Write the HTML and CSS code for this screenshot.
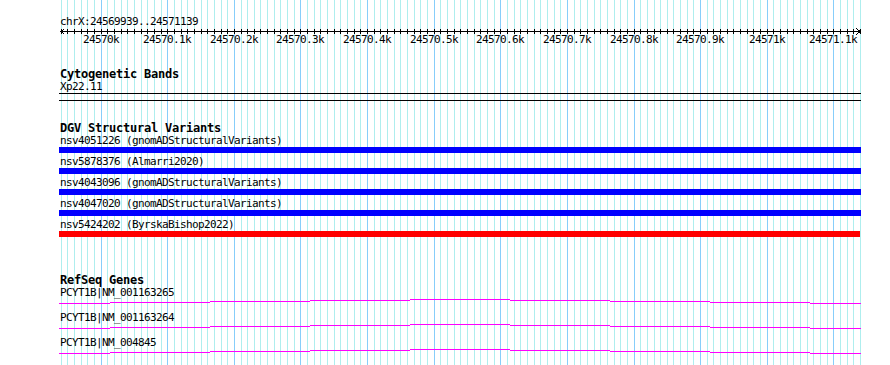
FILE: index.html
```html
<!DOCTYPE html>
<html lang="en">
<head>
    <meta charset="UTF-8">
    <title>chrX:24569939..24571139</title>
    <link rel="stylesheet" href="styles.css">
</head>
<body>
    <div class="browser">
        <svg class="grid" id="grid" width="890" height="365"></svg>

        <div class="ruler">
            <div class="ruler-title">chrX:24569939..24571139</div>
            <svg class="scale" id="scale" width="890" height="7"></svg>
            <div class="tick-labels" id="tick-labels"></div>
        </div>

        <section class="track cyto">
            <h2 class="track-title">Cytogenetic Bands</h2>
            <div class="feature-label">Xp22.11</div>
            <div class="band"></div>
        </section>

        <section class="track dgv">
            <h2 class="track-title">DGV Structural Variants</h2>
            <div class="variants">
                <div class="variant">
                    <div class="feature-label">nsv4051226 (gnomADStructuralVariants)</div>
                    <div class="bar loss"></div>
                </div>
                <div class="variant">
                    <div class="feature-label">nsv5878376 (Almarri2020)</div>
                    <div class="bar loss"></div>
                </div>
                <div class="variant">
                    <div class="feature-label">nsv4043096 (gnomADStructuralVariants)</div>
                    <div class="bar loss"></div>
                </div>
                <div class="variant">
                    <div class="feature-label">nsv4047020 (gnomADStructuralVariants)</div>
                    <div class="bar loss"></div>
                </div>
                <div class="variant">
                    <div class="feature-label">nsv5424202 (ByrskaBishop2022)</div>
                    <div class="bar gain"></div>
                </div>
            </div>
        </section>

        <section class="track refseq">
            <h2 class="track-title">RefSeq Genes</h2>
            <div class="genes">
                <div class="gene">
                    <div class="feature-label">PCYT1B|NM_001163265</div>
                    <svg class="hat" width="802" height="5"></svg>
                </div>
                <div class="gene">
                    <div class="feature-label">PCYT1B|NM_001163264</div>
                    <svg class="hat" width="802" height="5"></svg>
                </div>
                <div class="gene">
                    <div class="feature-label">PCYT1B|NM_004845</div>
                    <svg class="hat" width="802" height="5"></svg>
                </div>
            </div>
        </section>
    </div>

    <script>
        const SVG_NS = 'http://www.w3.org/2000/svg';
        const start = 24569939;
        const end = 24571139;
        const left = 60;
        const width = 800;
        const scale = width / (end - start + 1);

        function toX(pos) {
            return Math.round(left + (pos - start) * scale);
        }

        function addRect(svg, x, y, w, h, cls) {
            const r = document.createElementNS(SVG_NS, 'rect');
            r.setAttribute('x', x);
            r.setAttribute('y', y);
            r.setAttribute('width', w);
            r.setAttribute('height', h);
            r.setAttribute('class', cls);
            svg.appendChild(r);
        }

        // grid lines every 10bp, darker every 100bp
        const grid = document.getElementById('grid');
        const scaleBar = document.getElementById('scale');
        for (let pos = 24569940; pos <= end + 1; pos += 10) {
            const x = toX(pos);
            addRect(grid, x, 0, 1, 365, pos % 100 === 0 ? 'major' : 'minor');
            addRect(scaleBar, x, 1, 1, 5, 'ink');
        }

        // ruler line and arrow heads
        addRect(scaleBar, left, 3, width + 1, 1, 'ink');
        const arrows = document.createElementNS(SVG_NS, 'path');
        arrows.setAttribute('d', 'M64.5 0.5 L61 3.5 L64.5 6.5 M856.5 0.5 L860 3.5 L856.5 6.5');
        arrows.setAttribute('class', 'arrow');
        scaleBar.appendChild(arrows);

        const labels = document.getElementById('tick-labels');
        for (let pos = 24570000; pos <= end; pos += 100) {
            const label = document.createElement('span');
            label.className = 'tick-label';
            label.textContent = (pos / 1000) + 'k';
            label.style.left = toX(pos) + 'px';
            labels.appendChild(label);
        }

        // intron "hat" connectors, peak in the middle of the view
        const steps = [[59, 110, 4], [110, 210, 3], [210, 310, 2], [310, 410, 1], [410, 510, 0],
                       [510, 610, 1], [610, 710, 2], [710, 810, 3], [810, 861, 4]];
        document.querySelectorAll('.hat').forEach(svg => {
            steps.forEach(([x1, x2, y]) => addRect(svg, x1 - 59, y, x2 - x1, 1, 'intron'));
        });
    </script>
</body>
</html>
```

FILE: styles.css
```css
body {
    margin: 0;
    background-color: #fff;
    color: #000;
    font-family: "DejaVu Sans Mono", "Liberation Mono", monospace;
    font-size: 11px;
    letter-spacing: -0.62px;
}

.browser {
    position: relative;
    width: 890px;
    height: 365px;
    overflow: hidden;
}

.grid {
    position: absolute;
    top: 0;
    left: 0;
    shape-rendering: crispEdges;
}

.grid .minor {
    fill: #aeeeee;
}

.grid .major {
    fill: #87cefa;
}

.ruler {
    position: relative;
    padding-top: 16px;
}

.ruler-title {
    padding-left: 60px;
    line-height: 12px;
}

.scale {
    display: block;
    shape-rendering: crispEdges;
}

.scale .ink {
    fill: #000;
}

.scale .arrow {
    fill: none;
    stroke: #000;
    stroke-width: 1;
}

.tick-labels {
    position: relative;
    height: 10px;
    line-height: 10px;
}

.tick-label {
    position: absolute;
    top: 0;
    transform: translateX(-50%);
    white-space: nowrap;
}

.track {
    position: relative;
    padding-left: 60px;
}

.track-title {
    margin: 0;
    font-size: 12px;
    font-weight: bold;
    letter-spacing: -0.22px;
    line-height: 13px;
}

.feature-label {
    line-height: 11px;
    white-space: nowrap;
}

.cyto {
    margin-top: 23px;
}

.band {
    margin: 1px 0 0 -1px;
    width: 802px;
    height: 6px;
    border-top: 1px solid #000;
    border-bottom: 1px solid #000;
}

.dgv {
    margin-top: 21px;
}

.variants {
    display: flex;
    flex-direction: column;
    gap: 3px;
}

.bar {
    margin: 1px 0 0 -1px;
    width: 802px;
    height: 6px;
}

.bar.loss {
    background-color: #0000ff;
}

.bar.gain {
    width: 801px;
    background-color: #ff0000;
}

.refseq {
    margin-top: 37px;
}

.genes {
    display: flex;
    flex-direction: column;
    gap: 8px;
}

.hat {
    display: block;
    margin: 1px 0 0 -1px;
    shape-rendering: crispEdges;
}

.hat .intron {
    fill: #ff00ff;
}
```
